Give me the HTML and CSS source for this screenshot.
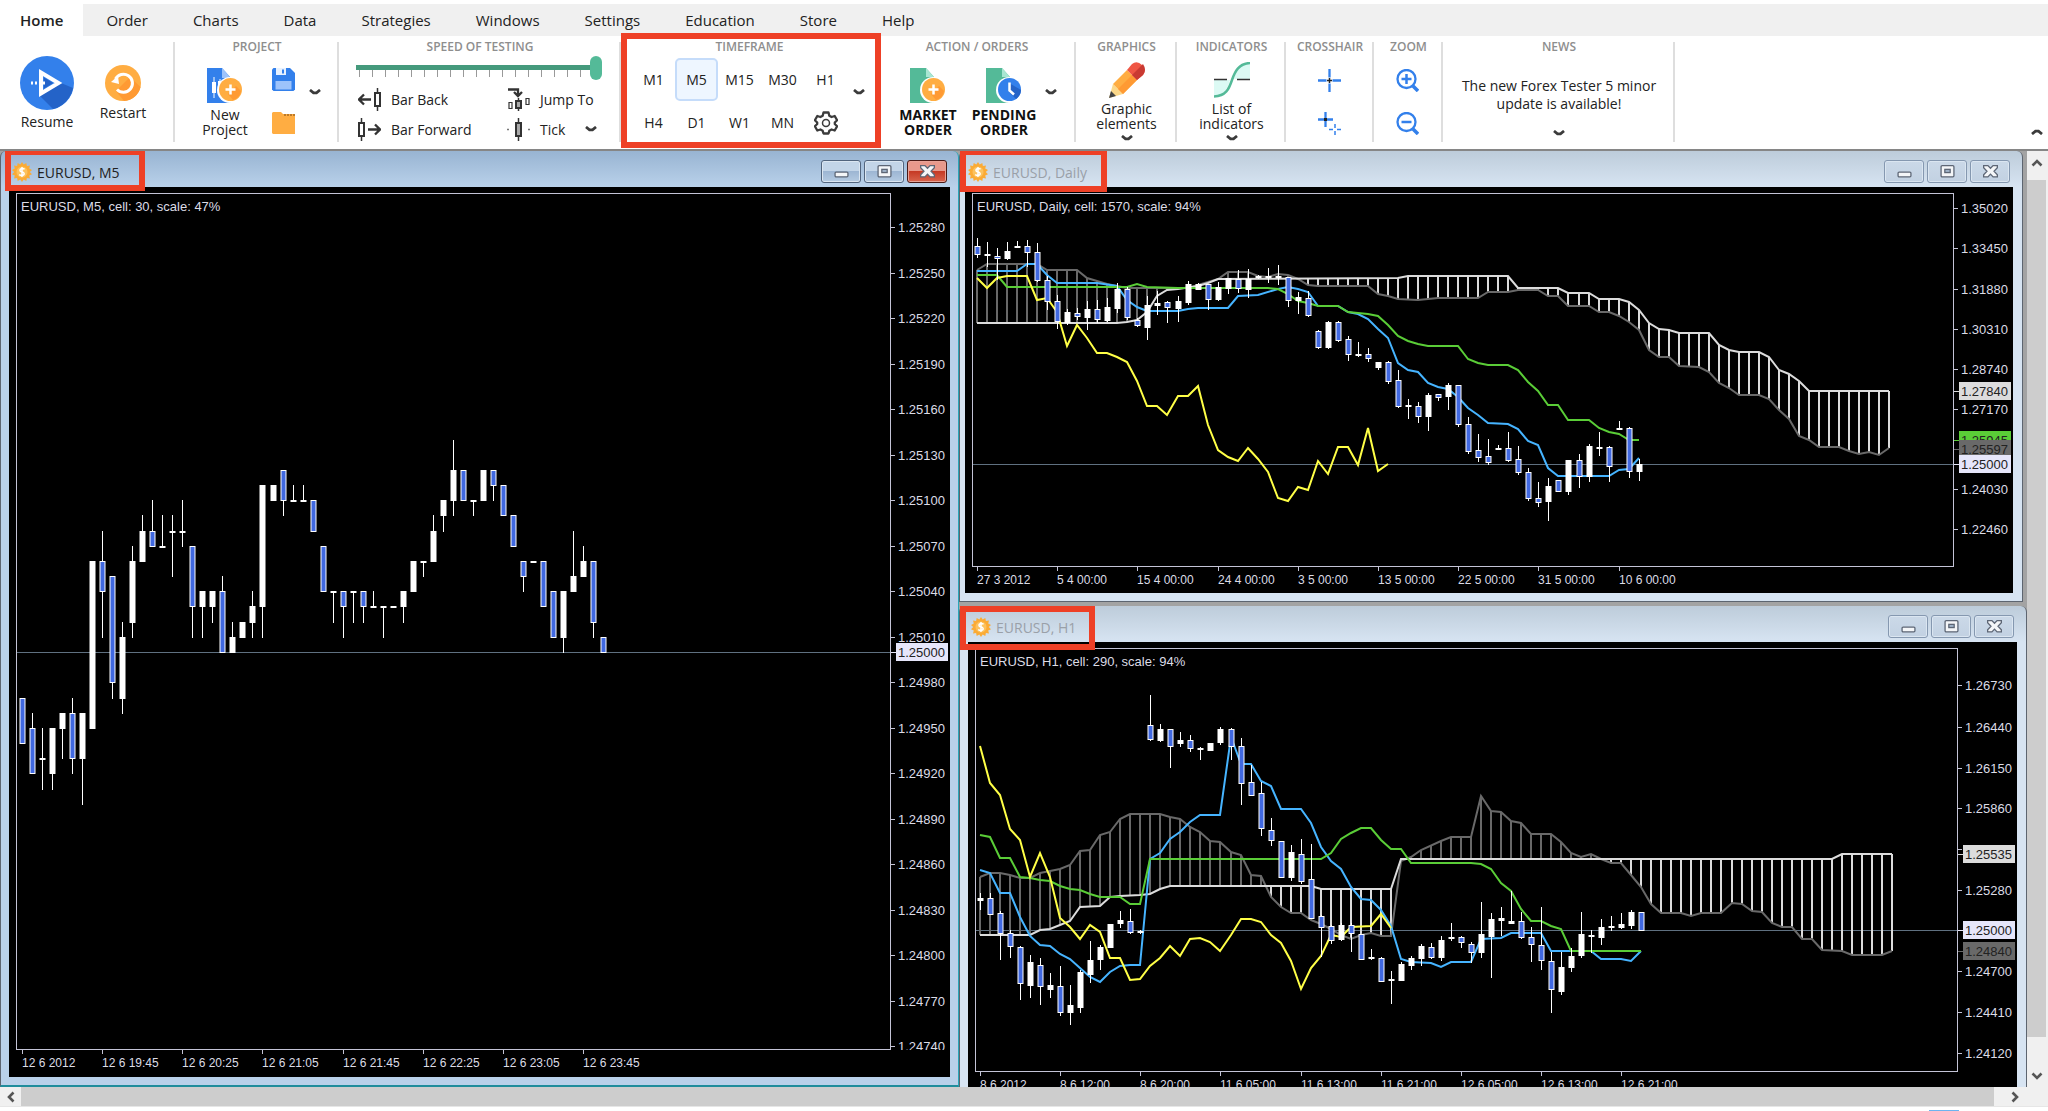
FILE: index.html
```html
<!DOCTYPE html>
<html lang="en">
<head>
  <meta charset="UTF-8">
  <title>Forex Tester</title>
  <meta name="viewport" content="width=device-width, initial-scale=1.0">
  <link rel="stylesheet" href="styles.css">
</head>
<body>

<!-- shared icons -->
<svg class="sprite" aria-hidden="true">
  <symbol id="chevron" viewBox="0 0 12 6"><path d="M1 1L4.500 3.800H7.500L11 1" fill="none" stroke="#3b3b3b" stroke-width="2.800"/></symbol>
  <symbol id="arrow" viewBox="0 0 12 8"><path d="M1.500 1.500 L6 6 L10.500 1.500" fill="none" stroke="#555" stroke-width="2.600"/></symbol>
  <symbol id="coin" viewBox="0 0 20 20">
    <path d="M10 0L11.700 2.600L14.300 1L14.900 4L18 3.500L17.200 6.500L20 8L17.800 10L20 12.200L17.200 13.600L18 16.600L14.900 16L14.300 19L11.700 17.400L10 20L8.300 17.400L5.700 19L5.100 16L2 16.600L2.800 13.600L0 12.200L2.200 10L0 8L2.800 6.500L2 3.500L5.100 4L5.700 1L8.300 2.600z" fill="#fbab35"/>
    <circle cx="10" cy="10" r="5.500" fill="#fcc25e"/>
    <path d="M12.600 7.200Q10 5.800 8.200 7.400 7.300 9.300 10 10q3 .800 1.900 2.700-2 1.500-4.700 0M10 5v10" fill="none" stroke="#fff" stroke-width="1.500"/>
  </symbol>
  <symbol id="win-min" viewBox="0 0 14 14"><rect x="1" y="7.500" width="12" height="4.500" rx="1" fill="#f4f6f8" stroke="#5d6675" stroke-width="1.200"/></symbol>
  <symbol id="win-max" viewBox="0 0 14 14"><rect x="1" y="1.500" width="12" height="10.500" rx="1" fill="#f4f6f8" stroke="#5d6675" stroke-width="1.200"/><rect x="4.500" y="5" width="5" height="3" fill="#9fb2c8" stroke="#5d6675" stroke-width="1.200"/></symbol>
  <symbol id="win-close" viewBox="0 0 14 14"><path d="M.600 1.500h4L7 4l2.400-2.500h4v2L10.300 6.800l3.100 3.200v2h-4L7 9.500 4.600 12h-4v-2l3.100-3.200L.600 3.500z" fill="#f4f6f8" stroke="#5d6675" stroke-width="1.200"/></symbol>
</svg>

<nav class="menu">
  <a href="#" class="active">Home</a>
  <a href="#">Order</a>
  <a href="#">Charts</a>
  <a href="#">Data</a>
  <a href="#">Strategies</a>
  <a href="#">Windows</a>
  <a href="#">Settings</a>
  <a href="#">Education</a>
  <a href="#">Store</a>
  <a href="#">Help</a>
</nav>

<div class="ribbon">
  <section class="group g-play">
    <button class="big resume">
      <svg width="54" height="54" viewBox="0 0 54 54">
        <circle cx="27" cy="27" r="27" fill="#3380eb"/>
        <path d="M41 27 L53 32 A27 27 0 0 1 33 53 L20 40z" fill="#2463c8"/>
        <path d="M21 16.500v21L38.500 27z" fill="#3380eb" stroke="#fff" stroke-width="4"/>
        <path d="M24 21.500v11L33 27z" fill="#2463c8"/>
        <path d="M11 27h14" stroke="#fff" stroke-width="3" stroke-dasharray="2 2"/>
      </svg>
      Resume
    </button>
    <button class="big restart">
      <svg width="36" height="36" viewBox="0 0 36 36">
        <circle cx="18" cy="18" r="18" fill="#ffad42"/>
        <path d="M25 12 L35.500 22 A18 18 0 0 1 19 36 L11 26z" fill="#ff9a33"/>
        <path d="M10.500 14A9 9 0 1 1 12 24.500" fill="none" stroke="#fff" stroke-width="3"/>
        <path d="M6 17l8 2-1-8z" fill="#fff"/>
      </svg>
      Restart
    </button>
  </section>

  <section class="group g-project">
    <h2>PROJECT</h2>
    <div class="row">
      <button class="big">
        <svg width="36" height="36" viewBox="0 0 36 36">
          <path d="M0 0h15l9 10v25H0z" fill="#3380eb"/><path d="M15 0l9 10h-9z" fill="#9dc3fb"/>
          <path d="M7 9v21M13 11v12" stroke="#fff" stroke-width="1"/><path d="M5 14h4v11H5zM11 13h4v8h-4z" fill="#fff"/>
          <circle cx="23" cy="22" r="13" fill="#fff"/><circle cx="23.500" cy="21.500" r="11.500" fill="#ffad42"/>
          <path d="M29 18l5 5a11.500 11.500 0 0 1-8 9l-5-6z" fill="#ff9a33"/>
          <path d="M18.500 21.500h10M23.500 16.500v10" stroke="#fff" stroke-width="2.500"/>
        </svg>
        New<br>Project
      </button>
      <div class="stack">
        <button aria-label="Save">
          <svg width="23" height="23" viewBox="0 0 23 23"><path d="M1.500 0H18l5 5v16.500L21.500 23h-20L0 21.500v-20z" fill="#3380eb"/><path d="M4 0h10v7H4z" fill="#e8f2ff"/><path d="M10 1.500h2v4h-2z" fill="#3380eb"/><path d="M3.500 13h16v8.500h-16z" fill="#9dc3fb"/></svg>
        </button>
        <button aria-label="Open">
          <svg width="23" height="24" viewBox="0 0 23 24"><path d="M1 1h8l2 2h12v20H1L0 22V2z" fill="#ffad42"/><path d="M12 4h11" stroke="#a86a20" stroke-width="1.500" stroke-dasharray="2 1"/></svg>
        </button>
      </div>
      <button class="drop" aria-label="More"><svg><use href="#chevron"/></svg></button>
    </div>
  </section>

  <section class="group g-speed">
    <h2><label for="speed">SPEED OF TESTING</label></h2>
    <input type="range" id="speed" min="0" max="19" value="19">
    <div class="steps">
      <button><svg width="23" height="23" viewBox="0 0 23 23"><path d="M1 11.500h12M6 6.500l-5 5 5 5" fill="none" stroke="#333" stroke-width="2.300"/><path d="M19.500 0v23" stroke="#333" stroke-width="1.500"/><path d="M17 5h5v13h-5z" fill="#fff" stroke="#333" stroke-width="2"/></svg>Bar Back</button>
      <button><svg width="23" height="23" viewBox="0 0 23 23"><path d="M1 1.500h10v6M7 4l4 4 4-4" fill="none" stroke="#333" stroke-width="2.300"/><path d="M2 14.500h3v6H2zM19 10.500h3v6h-3z" fill="#fff" stroke="#333" stroke-width="1.200"/><path d="M11.500 10v13" stroke="#333" stroke-width="1.500"/><path d="M9 13h5v7H9z" fill="#aaa" stroke="#333" stroke-width="2"/></svg>Jump To</button>
      <button><svg width="23" height="23" viewBox="0 0 23 23"><path d="M10 11.500h12M17 6.500l5 5-5 5" fill="none" stroke="#333" stroke-width="2.300"/><path d="M3.500 0v23" stroke="#333" stroke-width="1.500"/><path d="M1 5h5v13H1z" fill="#fff" stroke="#333" stroke-width="2"/></svg>Bar Forward</button>
      <button><svg width="23" height="23" viewBox="0 0 23 23"><path d="M11.500 0v23" stroke="#333" stroke-width="1.500"/><path d="M9 5h5v13H9z" fill="#aaa" stroke="#333" stroke-width="2"/><path d="M0 11.500h2M21 11.500h2" stroke="#777" stroke-width="1.500"/></svg>Tick <svg class="tick-drop"><use href="#chevron"/></svg></button>
    </div>
  </section>

  <section class="group g-time">
    <h2>TIMEFRAME</h2>
    <div class="row">
      <div class="frames">
        <button>M1</button><button class="on">M5</button><button>M15</button><button>M30</button><button>H1</button>
        <button>H4</button><button>D1</button><button>W1</button><button>MN</button>
        <button aria-label="Timeframe settings">
          <svg width="24" height="24" viewBox="0 0 24 24"><path d="M9.500 1.500h5l.800 3.200 2.300 1.300 3.100-1 2.400 4.200-2.300 2.300v1.500l2.300 2.300-2.400 4.200-3.100-1-2.300 1.300-.800 2.700h-5l-.800-2.700-2.300-1.300-3.100 1-2.400-4.200 2.300-2.300v-1.500L.900 9.200 3.300 5l3.100 1 2.300-1.300z" fill="none" stroke="#3b3b3b" stroke-width="2.300" stroke-linejoin="round"/><circle cx="12" cy="12" r="3.500" fill="none" stroke="#3b3b3b" stroke-width="1.500"/></svg>
        </button>
      </div>
      <button class="drop" aria-label="More"><svg><use href="#chevron"/></svg></button>
    </div>
    <i class="mark"></i>
  </section>

  <section class="group g-action">
    <h2>ACTION / ORDERS</h2>
    <div class="row">
      <button class="big strong">
        <svg width="36" height="36" viewBox="0 0 36 36"><path d="M0 0h16l8 9v26H0z" fill="#54ba98"/><path d="M16 0l8 9h-8z" fill="#a8e6d2"/><circle cx="23" cy="22" r="13" fill="#fff"/><circle cx="23.500" cy="21.500" r="11.500" fill="#ffad42"/><path d="M29 18l5 5a11.500 11.500 0 0 1-8 9l-5-6z" fill="#ff9a33"/><path d="M18.500 21.500h10M23.500 16.500v10" stroke="#fff" stroke-width="2.500"/></svg>
        MARKET<br>ORDER
      </button>
      <button class="big strong">
        <svg width="36" height="36" viewBox="0 0 36 36"><path d="M0 0h16l8 9v26H0z" fill="#54ba98"/><path d="M16 0l8 9h-8z" fill="#a8e6d2"/><circle cx="23" cy="22" r="13" fill="#fff"/><circle cx="23.500" cy="21.500" r="11.500" fill="#3380eb"/><path d="M23 15l12 7a11.500 11.500 0 0 1-5 9l-7-7z" fill="#2463c8"/><path d="M23.500 14.500v8l4.500 4" fill="none" stroke="#fff" stroke-width="2.500"/></svg>
        PENDING<br>ORDER
      </button>
      <button class="drop" aria-label="More"><svg><use href="#chevron"/></svg></button>
    </div>
  </section>

  <section class="group g-graphics">
    <h2>GRAPHICS</h2>
    <button class="big tall">
      <svg width="36" height="36" viewBox="0 0 36 36"><path d="M0 36l4-14 10 10z" fill="#fbd88a"/><path d="M0 36l2-7 5 5z" fill="#444"/><path d="M4 22L18 8l10 10-14 14z" fill="#ffad42"/><path d="M9 27L23 13l5 5-14 14z" fill="#ff9a33"/><path d="M18 8l5-6q5-4 10 1t1 10l-6 5z" fill="#ef5644"/><path d="M23 13l11-11q4 6 0 11l-6 5z" fill="#c93a32"/></svg>
      Graphic<br>elements
      <svg class="chev"><use href="#chevron"/></svg>
    </button>
  </section>

  <section class="group g-indicators">
    <h2>INDICATORS</h2>
    <button class="big tall">
      <svg width="36" height="36" viewBox="0 0 36 36"><path d="M0 18h16q-4 16-16 17zM20 17q3-15 16-16v16z" fill="#dcfaf4"/><path d="M0 17.500h13M23 17.500h13" stroke="#333" stroke-width="1.500"/><path d="M0 34.500C12 34 15 27 18 18S25 1.500 36 1" fill="none" stroke="#54ba98" stroke-width="2.500"/></svg>
      List of<br>indicators
      <svg class="chev"><use href="#chevron"/></svg>
    </button>
  </section>

  <section class="group">
    <h2>CROSSHAIR</h2>
    <div class="stack">
      <button aria-label="Crosshair"><svg width="23" height="23" viewBox="0 0 23 23"><path d="M11.500 0v23M0 11.500h23" stroke="#3380eb" stroke-width="2.300"/><path d="M8.500 11.500h6M11.500 8.500v6" stroke="#fff" stroke-width="3"/><path d="M9 11.500h5M11.500 9v5" stroke="#222" stroke-width="1.500"/></svg></button>
      <button aria-label="Linked crosshair"><svg width="23" height="23" viewBox="0 0 23 23"><path d="M7.500 0v15M0 7.500h15" stroke="#3380eb" stroke-width="2.300"/><path d="M6 7.500h3" stroke="#222" stroke-width="3"/><path d="M17 12v4M17 19v4M11 17.500h4M19 17.500h4" stroke="#3380eb" stroke-width="1.500"/></svg></button>
    </div>
  </section>

  <section class="group g-zoom">
    <h2>ZOOM</h2>
    <div class="stack">
      <button aria-label="Zoom in"><svg width="23" height="23" viewBox="0 0 23 23"><circle cx="10.500" cy="10" r="9" fill="none" stroke="#3380eb" stroke-width="2.300"/><path d="M5.500 10h10M10.500 5v10" stroke="#3380eb" stroke-width="2.500"/><path d="M17 17l5 5" stroke="#3380eb" stroke-width="3.500"/></svg></button>
      <button aria-label="Zoom out"><svg width="23" height="23" viewBox="0 0 23 23"><circle cx="10.500" cy="10" r="9" fill="none" stroke="#3380eb" stroke-width="2.300"/><path d="M5.500 10h10" stroke="#3380eb" stroke-width="2.500"/><path d="M17 17l5 5" stroke="#3380eb" stroke-width="3.500"/></svg></button>
    </div>
  </section>

  <section class="group g-news">
    <h2>NEWS</h2>
    <p>The new Forex Tester 5 minor<br>update is available!</p>
    <button class="drop" aria-label="More news"><svg><use href="#chevron"/></svg></button>
  </section>

  <button class="collapse" aria-label="Collapse ribbon"><svg><use href="#chevron"/></svg></button>
</div>

<div class="workspace">
  <div class="desktop">
    <section class="window active">
      <header>
        <svg class="coin"><use href="#coin"/></svg>
        <h3>EURUSD, M5</h3>
        <div class="controls">
          <button aria-label="Minimize"><svg><use href="#win-min"/></svg></button>
          <button aria-label="Maximize"><svg><use href="#win-max"/></svg></button>
          <button class="close" aria-label="Close"><svg><use href="#win-close"/></svg></button>
        </div>
        <i class="mark"></i>
      </header>
      <div class="chart" id="chart-m5"></div>
    </section>

    <div class="side">
      <section class="window daily">
        <header>
          <svg class="coin"><use href="#coin"/></svg>
          <h3>EURUSD, Daily</h3>
          <div class="controls">
            <button aria-label="Minimize"><svg><use href="#win-min"/></svg></button>
            <button aria-label="Maximize"><svg><use href="#win-max"/></svg></button>
            <button aria-label="Close"><svg><use href="#win-close"/></svg></button>
          </div>
          <i class="mark"></i>
        </header>
        <div class="chart" id="chart-daily"></div>
      </section>

      <section class="window hourly">
        <header>
          <svg class="coin"><use href="#coin"/></svg>
          <h3>EURUSD, H1</h3>
          <div class="controls">
            <button aria-label="Minimize"><svg><use href="#win-min"/></svg></button>
            <button aria-label="Maximize"><svg><use href="#win-max"/></svg></button>
            <button aria-label="Close"><svg><use href="#win-close"/></svg></button>
          </div>
          <i class="mark"></i>
        </header>
        <div class="chart" id="chart-h1"></div>
      </section>
    </div>
  </div>
  <div class="vscroll">
    <button class="up" aria-label="Scroll up"><svg><use href="#arrow"/></svg></button>
    <div class="thumb"></div>
    <button class="down" aria-label="Scroll down"><svg><use href="#arrow"/></svg></button>
  </div>
</div>

<div class="hscroll">
  <button class="left" aria-label="Scroll left"><svg><use href="#arrow"/></svg></button>
  <div class="thumb"></div>
  <button class="right" aria-label="Scroll right"><svg><use href="#arrow"/></svg></button>
</div>
<div class="status"></div>

<script src="charts.js"></script>
</body>
</html>
```

FILE: styles.css
```css
* { box-sizing: border-box; }
body {
  margin: 0;
  height: 100vh;
  display: flex;
  flex-direction: column;
  overflow: hidden;
  background: #fff;
  color: #222;
  font-family: "Open Sans", "Noto Sans", sans-serif;
  font-size: 14px;
}
button {
  padding: 0;
  border: 0;
  background: none;
  color: inherit;
  font: inherit;
  cursor: pointer;
}
h2, h3, p { margin: 0; }
svg { display: block; }
.sprite { position: absolute; width: 0; height: 0; }

/* menu */
.menu {
  display: flex;
  gap: 1px;
  margin-top: 4px;
  background: #f0f0f0;
}
.menu a {
  padding: 0 22px;
  line-height: 32px;
  font-size: 15px;
  color: #222;
  text-decoration: none;
}
.menu .active {
  padding: 0 20px;
  background: #fff;
  font-weight: 600;
}

/* ribbon */
.ribbon {
  display: flex;
  height: 115px;
  flex-shrink: 0;
  padding-top: 3px;
  border-bottom: 2px solid #868686;
}
.group {
  position: relative;
  width: 88px;
  flex-shrink: 0;
}
.group::after {
  content: "";
  position: absolute;
  top: 3px;
  right: 0;
  width: 2px;
  height: 100px;
  background: #dedede;
}
.group h2 {
  line-height: 16px;
  font-size: 12px;
  font-weight: 600;
  color: #8e8e8e;
  text-align: center;
  white-space: nowrap;
}
.row { display: flex; }
.big {
  display: flex;
  flex-direction: column;
  align-items: center;
  line-height: 15px;
}
.drop {
  width: 12px;
  height: 6px;
}
.drop svg, .chev, .tick-drop, .collapse svg {
  width: 12px;
  height: 6px;
}
.stack {
  display: flex;
  flex-direction: column;
  align-items: center;
  gap: 20px;
  padding: 14px 2px 0 0;
}

.g-play {
  width: 175px;
  display: flex;
  align-items: flex-start;
  padding-left: 20px;
}
.g-play .big { width: 54px; gap: 4px; }
.resume { margin-top: 17px; }
.restart { margin: 26px 0 0 22px; }

.g-project { width: 164px; }
.g-project .row { padding: 13px 0 0 26px; }
.g-project .big, .g-action .big { gap: 3px; }
.g-project .big { width: 48px; }
.g-project .stack { padding: 0 0 0 23px; }
.g-project .drop { margin: 21px 0 0 14px; }

.g-speed { width: 282px; }
#speed {
  appearance: none;
  display: block;
  width: 246px;
  height: 24px;
  margin: 1px 0 0 17px;
  background:
    linear-gradient(#459a7c, #459a7c) 0 9px / 240px 5px no-repeat,
    repeating-linear-gradient(90deg, #999 0 1px, transparent 1px 13px) 3px 14px / 234px 7px no-repeat;
}
#speed::-webkit-slider-thumb {
  appearance: none;
  width: 12px;
  height: 24px;
  border-radius: 6px;
  background: #54ba98;
}
.steps {
  display: grid;
  grid-template-columns: 149px 110px;
  grid-template-rows: 30px 30px;
  padding: 4px 0 0 19px;
}
.steps button {
  display: flex;
  align-items: center;
  gap: 10px;
}
.tick-drop { margin-left: 10px; }

.g-time { width: 257px; }
.g-time .row { padding: 3px 0 0 11px; }
.frames {
  display: grid;
  grid-template-columns: repeat(5, 43px);
  grid-auto-rows: 43px;
}
.frames button {
  display: flex;
  align-items: center;
  justify-content: center;
  border: 2px solid transparent;
  border-radius: 5px;
}
.frames .on {
  background: #eef6ff;
  border-color: #c5dcfa;
}
.g-time .drop { margin: 31px 0 0 6px; }

/* red frames round the highlighted parts */
.mark {
  position: absolute;
  z-index: 2;
  border: 6px solid #ee4026;
  pointer-events: none;
}
.g-time .mark {
  top: -6px;
  left: 0;
  width: 260px;
  height: 115px;
}

.g-action { width: 198px; }
.g-action .row { padding: 13px 0 0 12px; }
.g-action .big { width: 76px; }
.g-action .drop { margin: 21px 0 0 3px; }
.strong { font-weight: 700; color: #111; }
.g-graphics { width: 101px; }
.g-indicators { width: 109px; }
.tall {
  width: 100%;
  padding-top: 7px;
}
.tall svg:first-child { margin-bottom: 3px; }
.tall .chev { margin-top: 4px; }
.g-zoom { width: 69px; }
.g-news { width: 232px; text-align: center; }
.g-news p {
  padding-top: 22px;
  line-height: 18px;
  white-space: nowrap;
}
.g-news .drop { margin-top: 17px; }
.collapse {
  align-self: flex-end;
  margin: 0 5px 14px auto;
  transform: rotate(180deg);
}

/* workspace */
.workspace {
  display: flex;
  flex: 1;
  min-height: 0;
}
.desktop {
  display: grid;
  grid-template-columns: 959fr 1068fr;
  grid-template-rows: minmax(0, 1fr);
  flex: 1;
  overflow: hidden;
  background: #a3a3a3;
}
.side { min-width: 0; }
.window {
  min-width: 0;
  padding: 0 8px 8px;
  border: 1px solid #5d6570;
  border-top: 0;
  border-radius: 6px 6px 0 0;
  background: linear-gradient(#bdccda, #d7e4f2 36px);
}
.window.active {
  display: flex;
  flex-direction: column;
  border-right-color: #2aa6b8;
  border-bottom: 2px solid #1f8d9c;
  background: linear-gradient(#98b4d2, #b9d1ea 36px);
}
.window header {
  position: relative;
  display: flex;
  align-items: center;
  height: 36px;
  padding: 2px 0 0 3px;
}
.window h3 {
  margin: 4px 0 0 5px;
  font-size: 14px;
  font-weight: 400;
  color: #9aa0a8;
}
.window.active h3 { color: #222; }
.coin {
  width: 20px;
  height: 20px;
  margin-top: 4px;
}
.controls {
  display: flex;
  gap: 3px;
  margin: 2px 3px 0 auto;
}
.controls button {
  display: flex;
  align-items: center;
  justify-content: center;
  width: 40px;
  height: 23px;
  border: 1px solid #8598b0;
  border-radius: 3px;
  background: linear-gradient(#cbd9e8, #c2d1e2);
  box-shadow: inset 0 0 0 1px #dbe6f1;
}
.controls svg {
  width: 15px;
  height: 15px;
}
.active .controls button {
  border-color: #52657e;
  background: linear-gradient(#c3d5e8 48%, #9db6d3 50%, #b5cbe2);
}
.active .controls .close {
  border-color: #4a1a16;
  background: linear-gradient(#e8998c 48%, #c63a25 50%, #d8654e);
  box-shadow: inset 0 0 0 1px #e8a397;
}
.active .mark {
  top: -2px;
  left: -4px;
  width: 140px;
  height: 42px;
}
.daily { margin-right: 4px; padding: 0 9px 8px 5px; }
.daily .mark { top: -2px; left: -5px; width: 147px; height: 43px; }
.hourly { margin-top: 4px; padding-right: 9px; }
.hourly .mark { top: 0; left: -8px; width: 135px; height: 44px; }

/* charts */
.chart {
  display: grid;
  grid-template-columns: 1fr 59px;
  padding: 6px 0 0 7px;
  background: #000;
}
.active .chart {
  flex: 1;
  min-height: 0;
  align-content: start;
  overflow: hidden;
}
.chart svg {
  overflow: hidden;
  width: 100%;
}
.chart .plot { border: 1px solid #c4c4d6; }
.chart .time-axis { height: 26px; grid-column: 1 / 3; }
.chart text {
  font-family: "Liberation Sans", Arial, sans-serif;
  font-size: 13px;
  fill: #dcdce6;
}
.chart .time-axis text { font-size: 12px; }
.axis-tick { stroke: #c4c4d6; }
.price-line { stroke: #5f7080; }
.candle line { stroke: #fff; stroke-width: 1; }
.candle rect { fill: #fff; stroke: #fff; }
.candle .down { fill: #4169e1; }
.cloud-up { stroke: #dcdcdc; stroke-width: 2; }
.cloud-down { stroke: #696969; stroke-width: 2; }
.line { fill: none; stroke-width: 2; }
.lead-a { stroke: #dcdcdc; }
.lead-b { stroke: #696969; }
.kijun { stroke: #5acd37; }
.tenkan { stroke: #46b4ff; }
.chikou { stroke: #ffff46; }
.chart .badge text { fill: #222; }

/* scroll bars */
.vscroll {
  display: flex;
  flex-direction: column;
  width: 21px;
  padding-right: 2px;
  background: #f0f0f0;
}
.vscroll button, .hscroll button {
  display: flex;
  align-items: center;
  justify-content: center;
}
.vscroll svg, .hscroll svg { width: 12px; height: 8px; }
.vscroll .up { height: 29px; padding-bottom: 6px; }
.vscroll .up svg { transform: rotate(180deg); }
.vscroll .thumb { flex: 1; background: #cdcdcd; }
.vscroll .down { height: 50px; padding-top: 28px; }
.hscroll {
  display: flex;
  height: 20px;
  flex-shrink: 0;
  background: #f0f0f0;
  border-bottom: 1px solid #e6e6e6;
}
.hscroll .thumb { flex: 1; background: #cdcdcd; }
.hscroll .left { width: 21px; }
.hscroll .left svg { transform: rotate(90deg); }
.hscroll .right { width: 54px; padding-right: 12px; }
.hscroll .right svg { transform: rotate(-90deg); }
.status {
  height: 4px;
  flex-shrink: 0;
  background: linear-gradient(#6cb4f0, #6cb4f0) calc(100% - 89px) 3px / 30px 1px no-repeat;
}
```

FILE: charts.js
```js
// every chart: x = x0 + i * step, y = y0 + value * k
// candles are [open, high, low, close]
const charts = [
  {
    id: "chart-m5",
    title: "EURUSD, M5, cell: 30, scale: 47%",
    height: 857, x0: 5, step: 10.02, y0: 458, k: -15.17, body: 5,
    priceLine: 0,
    prices: [28, 25, 22, 19, 16, 13, 10, 7, 4, 1, -2, -5, -8, -11, -14, -17, -20, -23, -26]
      .map(n => [n, (1.25 + n / 10000).toFixed(5)]),
    badges: [[0, "1.25000", "#e6e6fa"]],
    times: ["12 6 2012", "12 6 19:45", "12 6 20:25", "12 6 21:05", "12 6 21:45", "12 6 22:25", "12 6 23:05", "12 6 23:45"],
    candles: [
      [-3,-3,-6,-6],[-5,-4,-8,-8],[-7,-5,-9,-7],[-8,-5,-9,-5],[-5,-4,-7,-4],[-4,-3,-8,-7],[-7,-4,-10,-4],[-5,6,-5,6],
      [6,8,1,4],[5,5,-3,-2],[-3,2,-4,1],[2,7,1,6],[6,9,6,8],[8,10,7,7],[7,9,7,7],[8,9,5,8],
      [8,10,7,8],[7,7,1,3],[3,4,1,4],[3,4,2,4],[4,5,0,0],[0,2,0,1],[1,2,1,2],[2,4,1,3],
      [3,11,1,11],[10,11,10,11],[12,12,9,10],[10,11,10,10],[10,11,10,10],[10,10,8,8],[7,7,4,4],[4,4,2,4],
      [4,4,1,3],[4,4,2,4],[4,4,2,3],[3,4,3,3],[3,3,1,3],[3,3,3,3],[3,4,2,4],[4,6,4,6],
      [6,6,5,6],[6,9,6,8],[9,10,8,10],[10,14,9,12],[12,12,10,10],[10,10,9,10],[10,12,10,12],[12,12,10,11],
      [11,11,9,9],[9,9,7,7],[6,6,4,5],[6,6,6,6],[6,6,3,3],[4,4,1,1],[1,4,0,4],[4,8,4,5],
      [5,7,5,6],[6,6,1,2],[1,1,0,0]
    ]
  },
  {
    id: "chart-daily",
    title: "EURUSD, Daily, cell: 1570, scale: 94%",
    height: 374, x0: 4, step: 10.025, y0: -15, k: 1 / 3, body: 5,
    priceLine: 856,
    prices: [[88, "1.35020"], [208, "1.33450"], [329, "1.31880"], [450, "1.30310"], [569, "1.28740"], [690, "1.27170"], [930, "1.24030"], [1050, "1.22460"]],
    badges: [[637, "1.27840", "#dcdcdc"], [784, "1.25945", "#5acd37"], [810, "1.25597", "#696969"], [855, "1.25000", "#e6e6fa"]],
    times: ["27 3 2012", "5 4 00:00", "15 4 00:00", "24 4 00:00", "3 5 00:00", "13 5 00:00", "22 5 00:00", "31 5 00:00", "10 6 00:00"],
    candles: [
      [202,178,233,226],[229,190,262,224],[230,208,300,236],[236,190,240,215],[202,185,202,202],[202,182,262,220],
      [220,193,306,304],[304,290,390,367],[367,347,446,427],[430,390,435,400],[402,388,420,412],[413,365,450,389],
      [390,363,430,420],[422,357,426,385],[387,313,400,329],[329,325,420,415],[424,418,440,439],[443,350,481,378],
      [379,335,406,371],[370,366,430,385],[387,350,425,366],[369,306,376,314],[330,312,330,316],[316,316,390,360],
      [360,310,364,325],[327,297,342,298],[299,272,338,328],[330,270,355,299],[294,288,297,292],[292,267,308,292],
      [292,257,315,292],[293,293,380,364],[364,340,402,355],[356,335,410,409],[457,452,508,504],[504,425,508,430],
      [430,426,486,482],[479,472,542,526],[525,490,530,525],[525,508,545,537],[564,548,570,550],[549,545,612,605],
      [603,573,683,680],[681,660,718,679],[682,668,728,710],[711,643,752,647],[645,645,664,654],[651,612,689,618],
      [619,619,740,736],[735,715,823,816],[814,765,845,833],[832,780,856,850],[806,797,808,806],[806,760,846,842],
      [841,801,886,879],[878,866,962,958],[958,910,980,968],[966,896,1022,922],[904,904,936,936],[936,843,946,843],
      [844,824,924,890],[892,795,906,801],[805,760,827,803],[805,802,906,860],[747,726,750,747],[747,743,894,875],
      [876,840,902,855]
    ],
    leadA: [[0,433],[14,433],[15,430],[16,424],[17,398],[18,350],[19,332],[20,329],[22,322],[23,312],[24,299],[42,298],[43,290],[53,290],[54,328],[58,328],[59,343],[61,343],[62,361],[64,361],[65,368],[66,394],[67,433],[68,450],[69,453],[70,463],[73,463],[74,499],[75,514],[76,520],[78,520],[79,534],[80,572],[81,584],[82,605],[83,635],[91,635]],
    leadB: [[0,272],[1,256],[6,256],[7,272],[10,274],[11,297],[12,306],[13,315],[14,322],[15,326],[21,326],[24,300],[25,280],[27,280],[28,292],[29,295],[30,286],[31,287],[32,300],[33,318],[34,320],[39,320],[40,345],[41,350],[42,360],[44,362],[46,357],[50,357],[51,340],[53,338],[54,334],[56,334],[57,350],[58,352],[59,380],[61,380],[62,399],[63,400],[64,411],[65,429],[66,453],[67,512],[68,534],[69,535],[70,560],[72,564],[73,578],[74,612],[75,628],[76,648],[78,648],[79,660],[80,694],[81,720],[82,772],[83,782],[84,804],[86,804],[87,816],[88,824],[89,819],[90,828],[91,808]],
    tenkan: [[0,275],[4,275],[5,254],[6,254],[7,288],[8,313],[12,313],[14,322],[15,362],[16,385],[17,396],[20,396],[21,390],[22,387],[25,387],[26,351],[28,347],[30,330],[31,325],[32,329],[33,338],[34,380],[36,381],[37,400],[38,404],[39,420],[40,450],[41,476],[42,553],[43,574],[44,580],[45,612],[46,623],[47,631],[48,655],[49,687],[50,709],[51,733],[53,734],[54,750],[55,787],[56,798],[57,868],[58,891],[63,891],[64,874],[65,871],[66,838]],
    kijun: [[0,287],[2,287],[3,324],[15,324],[16,315],[17,324],[20,328],[29,328],[30,331],[31,345],[32,366],[33,372],[34,380],[36,381],[37,399],[38,402],[39,404],[40,412],[41,437],[42,470],[43,487],[44,494],[45,500],[48,500],[49,540],[50,553],[51,558],[53,558],[54,574],[55,610],[56,637],[57,678],[58,678],[59,722],[61,722],[62,746],[63,758],[64,764],[65,782],[66,782]],
    chikou: [[0,298],[1,326],[2,296],[3,290],[5,290],[6,362],[7,358],[8,400],[9,500],[10,437],[11,478],[12,522],[13,523],[14,535],[15,550],[16,606],[17,681],[18,681],[19,707],[20,651],[21,651],[22,620],[23,738],[24,813],[25,834],[26,847],[27,807],[28,840],[29,878],[30,958],[31,967],[32,924],[33,934],[34,846],[35,886],[36,804],[37,804],[38,858],[39,747],[40,875],[41,856]]
  },
  {
    id: "chart-h1",
    title: "EURUSD, H1, cell: 290, scale: 94%",
    height: 424, x0: 4, step: 10.02, y0: -9, k: 1 / 3, body: 5,
    priceLine: 870,
    prices: [[136, "1.26730"], [260, "1.26440"], [384, "1.26150"], [505, "1.25860"], [628, "1.25570"], [749, "1.25280"], [993, "1.24700"], [1117, "1.24410"], [1238, "1.24120"]],
    badges: [[643, "1.25535", "#dcdcdc"], [869, "1.25000", "#e6e6fa"], [933, "1.24840", "#696969"]],
    times: ["8 6 2012", "8 6 12:00", "8 6 20:00", "11 6 05:00", "11 6 13:00", "11 6 21:00", "12 6 05:00", "12 6 13:00", "12 6 21:00"],
    candles: [
      [779,760,807,775],[775,760,822,822],[820,813,957,878],[880,870,950,918],[922,918,1077,1030],[1036,944,1070,966],
      [975,955,1093,1039],[1046,1000,1070,1034],[1039,978,1126,1117],[1115,1034,1153,1094],[1100,990,1115,996],[1002,903,1025,959],
      [957,916,988,921],[922,851,922,851],[848,813,860,840],[843,808,880,875],[877,870,878,872],[254,165,300,296],
      [300,252,304,267],[268,268,382,317],[310,276,318,301],[301,286,333,325],[325,320,356,325],[329,308,329,308],
      [307,260,311,266],[268,264,356,317],[317,293,491,430],[427,375,464,464],[460,425,584,565],[569,534,615,599],
      [603,603,712,712],[710,614,720,636],[641,598,728,724],[718,612,835,835],[828,824,948,862],[859,856,908,900],
      [897,850,900,854],[856,850,932,878],[882,882,956,956],[952,928,956,952],[955,950,1024,1024],[1018,993,1089,1016],
      [1021,965,1021,973],[976,948,986,955],[954,912,975,917],[922,910,955,950],[950,887,961,899],[895,850,900,891],
      [892,887,920,907],[911,905,965,935],[935,787,950,883],[889,820,1010,838],[840,801,885,835],[848,752,849,844],
      [843,815,893,890],[891,861,962,911],[914,801,987,961],[964,935,1116,1047],[1052,935,1062,981],[980,925,992,947],
      [945,817,950,883],[889,870,935,885],[890,838,912,860],[858,828,870,858],[861,820,863,853],[856,811,864,816],
      [817,817,870,870]
    ],
    leadA: [[0,886],[5,886],[6,870],[7,867],[8,855],[9,843],[10,802],[12,797],[13,772],[14,768],[16,766],[17,762],[18,748],[19,738],[33,738],[34,748],[41,748],[42,658],[85,658],[86,642],[91,642]],
    leadB: [[0,710],[1,698],[2,700],[3,706],[4,714],[5,714],[6,698],[7,694],[8,686],[9,675],[10,632],[11,631],[12,584],[13,576],[14,537],[15,523],[16,521],[18,522],[19,531],[20,536],[21,560],[22,577],[23,604],[24,605],[25,635],[26,645],[27,706],[28,708],[29,772],[30,800],[31,818],[32,820],[33,841],[34,852],[35,868],[36,885],[37,898],[38,885],[39,878],[40,887],[41,887],[42,662],[43,652],[44,630],[46,604],[47,590],[49,590],[50,468],[51,514],[52,515],[53,543],[54,549],[55,582],[57,582],[58,606],[59,640],[60,650],[61,641],[62,658],[63,668],[64,670],[65,704],[66,740],[67,792],[68,818],[70,820],[71,827],[72,820],[74,818],[75,788],[76,793],[77,814],[78,817],[79,848],[80,861],[81,861],[82,897],[83,898],[84,930],[86,932],[87,944],[90,946],[91,933]],
    tenkan: [[0,690],[1,700],[2,758],[3,760],[4,830],[5,888],[6,915],[7,917],[8,943],[9,957],[10,983],[11,1012],[12,1026],[13,997],[14,979],[15,976],[16,976],[17,657],[18,638],[19,598],[20,577],[21,546],[22,526],[24,525],[25,290],[26,371],[27,372],[28,422],[29,437],[30,507],[32,507],[33,548],[34,620],[35,663],[36,688],[37,740],[38,777],[39,779],[40,810],[41,857],[42,957],[43,965],[45,969],[46,981],[47,967],[49,965],[50,898],[52,894],[53,879],[56,880],[57,932],[61,932],[62,958],[64,958],[65,962],[66,932]],
    kijun: [[0,585],[1,590],[2,653],[3,655],[4,712],[5,715],[6,720],[7,722],[8,738],[9,748],[10,749],[11,761],[12,770],[14,770],[15,793],[16,793],[17,657],[34,657],[35,640],[36,598],[37,578],[38,565],[39,564],[40,600],[41,627],[42,628],[43,668],[49,669],[50,673],[51,688],[52,730],[53,752],[54,808],[55,842],[56,842],[57,858],[58,866],[59,932],[66,932]],
    chikou: [[0,318],[1,430],[2,465],[3,566],[4,600],[5,710],[6,638],[7,712],[8,835],[9,862],[10,898],[11,856],[12,876],[13,953],[14,954],[15,1021],[16,1017],[17,977],[18,955],[19,919],[20,947],[21,898],[22,894],[23,907],[24,933],[25,885],[26,838],[27,838],[28,847],[29,886],[30,910],[31,962],[32,1046],[33,985],[34,947],[35,886],[36,890],[37,860],[39,857],[40,822],[41,865]]
  }
];

function valueAt(points, i) {
  for (let n = 1; n < points.length; n++) {
    const [x1, y1] = points[n - 1];
    const [x2, y2] = points[n];
    if (i <= x2) return y1 + (y2 - y1) * (i - x1) / (x2 - x1);
  }
  return points[points.length - 1][1];
}

function drawChart(c) {
  const x = i => Math.round(c.x0 + i * c.step);
  const y = v => Math.round(c.y0 + v * c.k);
  const line = (points, name) =>
    `<polyline class="line ${name}" points="${points.map(p => x(p[0]) + "," + y(p[1])).join(" ")}"/>`;

  let plot = `<line class="price-line" x1="0" x2="100%" y1="${y(c.priceLine) + 0.5}" y2="${y(c.priceLine) + 0.5}"/>`;

  if (c.leadA) {
    // hatching between the two leading spans
    const last = c.leadA[c.leadA.length - 1][0];
    for (let i = 0; i <= last; i++) {
      const a = y(valueAt(c.leadA, i));
      const b = y(valueAt(c.leadB, i));
      plot += `<line class="${b < a ? "cloud-down" : "cloud-up"}" x1="${x(i)}" x2="${x(i)}" y1="${a}" y2="${b}"/>`;
    }
    plot += line(c.leadB, "lead-b") + line(c.leadA, "lead-a");
    plot += line(c.tenkan, "tenkan") + line(c.kijun, "kijun") + line(c.chikou, "chikou");
  }

  c.candles.forEach(([open, high, low, close], i) => {
    const top = Math.min(y(open), y(close));
    // a bar that closes where it opened is still a visible dash
    const h = Math.max(Math.abs(y(open) - y(close)), 1);
    const down = c.k < 0 ? close < open : close > open;
    plot += `<g class="candle"><line x1="${x(i) + 0.5}" x2="${x(i) + 0.5}" y1="${y(high)}" y2="${y(low) + 1}"/>`;
    plot += `<rect${down ? ' class="down"' : ""} x="${x(i) - c.body / 2 + 0.5}" y="${top + 0.5}" width="${c.body}" height="${h}"/></g>`;
  });
  plot += `<text x="4" y="17">${c.title}</text>`;

  // labels sit one pixel lower than the plot, which has a border
  let axis = "";
  c.prices.forEach(([v, label]) => {
    axis += `<path class="axis-tick" d="M0 ${y(v) + 1.5}h4"/><text x="7" y="${y(v) + 6}">${label}</text>`;
  });
  c.badges.forEach(([v, label, color]) => {
    axis += `<g class="badge"><path d="M0 ${y(v) + 1.5}h6" stroke="${color}"/><rect x="5" y="${y(v) - 8}" width="52" height="18" fill="${color}"/><text x="7" y="${y(v) + 6}">${label}</text></g>`;
  });

  let times = "";
  c.times.forEach((label, n) => {
    const tx = x(n * 8) + 1;
    times += `<path class="axis-tick" d="M${tx + 0.5} 0v4"/><text x="${tx}" y="17">${label}</text>`;
  });

  document.getElementById(c.id).innerHTML =
    `<svg class="plot" height="${c.height}">${plot}</svg>
     <svg class="price-axis" height="${c.height}">${axis}</svg>
     <svg class="time-axis">${times}</svg>`;
}

charts.forEach(drawChart);
```
